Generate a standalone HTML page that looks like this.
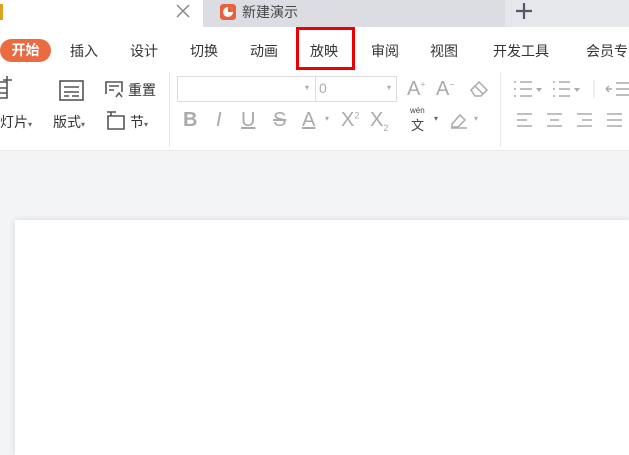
<!DOCTYPE html><html><head><meta charset="utf-8"><style>
body{margin:0;width:629px;height:455px;overflow:hidden;background:#f3f4f6;font-family:"Liberation Sans","Noto Sans CJK SC",sans-serif;position:relative}
.a{position:absolute;white-space:nowrap}
.t{font-size:14px;color:#333}
.g{color:#aaa}
svg{position:absolute}
</style></head><body>
<div class="a" style="left:0;top:0;width:203px;height:27px;background:#fff"></div>
<div class="a" style="left:203px;top:0;width:302px;height:27px;background:#dcdde2"></div>
<div class="a" style="left:505px;top:0;width:124px;height:27px;background:#e6e7ea"></div>
<div class="a" style="left:0;top:4px;width:3px;height:16px;background:#e0a020"></div>
<svg style="left:176px;top:4px" width="14" height="14"><path d="M1 1L13 13M13 1L1 13" stroke="#888" stroke-width="1.5"/></svg>
<div class="a" style="left:220px;top:4px;width:16px;height:16px;background:#e8603c;border-radius:3px"><svg width="16" height="16"><circle cx="8" cy="8" r="5" fill="#fff"/><path d="M8 8V3A5 5 0 0 1 13 8Z" fill="#e8603c"/></svg></div>
<div class="a t" style="left:242px;top:2px;color:#444">新建演示</div>
<svg style="left:516px;top:3px" width="16" height="16"><path d="M8 0V16M0 8H16" stroke="#556" stroke-width="2.2"/></svg>
<div class="a" style="left:0;top:27px;width:629px;height:123px;background:#fff;border-bottom:1px solid #e6e6e6"></div>
<div class="a" style="left:0;top:39px;width:51px;height:23px;background:#ea6b40;border-radius:12px;color:#fff;font-size:14px;line-height:23px;text-align:center;font-weight:bold">开始</div>
<div class="a t" style="left:70px;top:41px">插入</div>
<div class="a t" style="left:130px;top:41px">设计</div>
<div class="a t" style="left:190px;top:41px">切换</div>
<div class="a t" style="left:250px;top:41px">动画</div>
<div class="a" style="left:296px;top:27px;width:59px;height:43px;border:3px solid #e00;box-sizing:border-box"></div>
<div class="a t" style="left:310px;top:41px">放映</div>
<div class="a t" style="left:371px;top:41px">审阅</div>
<div class="a t" style="left:430px;top:41px">视图</div>
<div class="a t" style="left:493px;top:41px">开发工具</div>
<div class="a t" style="left:586px;top:41px">会员专</div>
<svg style="left:0;top:76px" width="12" height="24"><path d="M0 6H7V22H0M7 0V10M3 4H12M0 12H7M0 17H7" stroke="#555" stroke-width="1.6" fill="none"/></svg>
<div class="a t" style="left:0;top:112px">灯片<span style="font-size:8px;color:#666">▾</span></div>
<svg style="left:59px;top:80px" width="26" height="22"><rect x="1" y="1" width="23" height="19" fill="none" stroke="#555" stroke-width="1.6"/><path d="M5 7H20M5 12H20M5 16H10M13 16H20" stroke="#555" stroke-width="1.6"/></svg>
<div class="a t" style="left:53px;top:112px">版式<span style="font-size:8px;color:#666">▾</span></div>
<svg style="left:104px;top:80px" width="22" height="20"><path d="M2 14V2H18V12M5 6H15M5 10H10" stroke="#555" stroke-width="1.6" fill="none"/><path d="M12 17L15 13L18 17" stroke="#555" stroke-width="1.5" fill="none"/></svg>
<div class="a t" style="left:128px;top:80px">重置</div>
<svg style="left:106px;top:111px" width="20" height="20"><path d="M1 1H10M5 1L5 5M2 5H18V18H2Z" stroke="#555" stroke-width="1.6" fill="none"/></svg>
<div class="a t" style="left:130px;top:112px">节<span style="font-size:8px;color:#666">▾</span></div>
<div class="a" style="left:169px;top:72px;width:1px;height:75px;background:#e8e8e8"></div>
<div class="a" style="left:177px;top:76px;width:220px;height:26px;border:1px solid #ddd;box-sizing:border-box"></div>
<div class="a" style="left:315px;top:76px;width:1px;height:26px;background:#ddd"></div>
<div class="a g" style="left:305px;top:83px;font-size:8px">▾</div>
<div class="a g" style="left:319px;top:80px;font-size:14px">0</div>
<div class="a g" style="left:387px;top:83px;font-size:8px">▾</div>
<div class="a g" style="left:407px;top:78px;font-size:20px">A<sup style="font-size:9px">+</sup></div>
<div class="a g" style="left:436px;top:78px;font-size:20px">A<sup style="font-size:9px">−</sup></div>
<svg style="left:469px;top:80px" width="20" height="18"><path d="M2 10L10 2L18 10L12 16H6Z M6 6L14 14" stroke="#aaa" stroke-width="1.5" fill="none"/></svg>
<div class="a g" style="left:183px;top:109px;font-size:20px;font-weight:bold">B</div>
<div class="a g" style="left:216px;top:109px;font-size:20px;font-style:italic">I</div>
<div class="a g" style="left:241px;top:109px;font-size:20px;text-decoration:underline">U</div>
<div class="a g" style="left:273px;top:109px;font-size:20px;text-decoration:line-through">S</div>
<div class="a g" style="left:302px;top:109px;font-size:20px;text-decoration:underline">A</div>
<div class="a g" style="left:325px;top:114px;font-size:8px">▾</div>
<div class="a g" style="left:341px;top:109px;font-size:20px">X<sup style="font-size:9px">2</sup></div>
<div class="a g" style="left:370px;top:109px;font-size:20px">X<sub style="font-size:9px">2</sub></div>
<div class="a" style="left:410px;top:106px;font-size:8px;color:#444">wén</div>
<div class="a" style="left:411px;top:115px;font-size:13px;color:#444">文</div>
<div class="a" style="left:434px;top:114px;font-size:8px;color:#666">▾</div>
<svg style="left:449px;top:110px" width="22" height="20"><path d="M3 14L11 5L16 10L9 17H3ZM2 18H18" stroke="#aaa" stroke-width="1.5" fill="none"/></svg>
<div class="a g" style="left:474px;top:114px;font-size:8px">▾</div>
<div class="a" style="left:500px;top:72px;width:1px;height:75px;background:#e8e8e8"></div>
<svg style="left:512px;top:80px" width="120" height="20"><g stroke="#aaa" stroke-width="1.5"><path d="M2 2H4M2 9H4M2 16H4M8 2H20M8 9H20M8 16H20"/><path d="M41 2H43M41 9H43M41 16H43M47 2H58M47 9H58M47 16H58"/></g><path d="M24 8L27 12L30 8Z M62 8L65 12L68 8Z" fill="#aaa"/><path d="M82 0V18" stroke="#ddd"/><path d="M94 9H100M94 9L97 6M94 9L97 12M104 3H120M104 9H120M104 15H120" stroke="#aaa" stroke-width="1.4"/></svg>
<svg style="left:516px;top:112px" width="113" height="18"><g stroke="#aaa" stroke-width="1.5"><path d="M1 2H16M1 8H11M1 14H16"/><path d="M31 2H46M34 8H43M31 14H46"/><path d="M61 2H76M66 8H76M61 14H76"/><path d="M91 2H106M91 8H106M91 14H106"/></g></svg>
<div class="a" style="left:15px;top:220px;width:614px;height:235px;background:#fff;box-shadow:0 0 6px rgba(0,0,0,.12)"></div>
</body></html>
